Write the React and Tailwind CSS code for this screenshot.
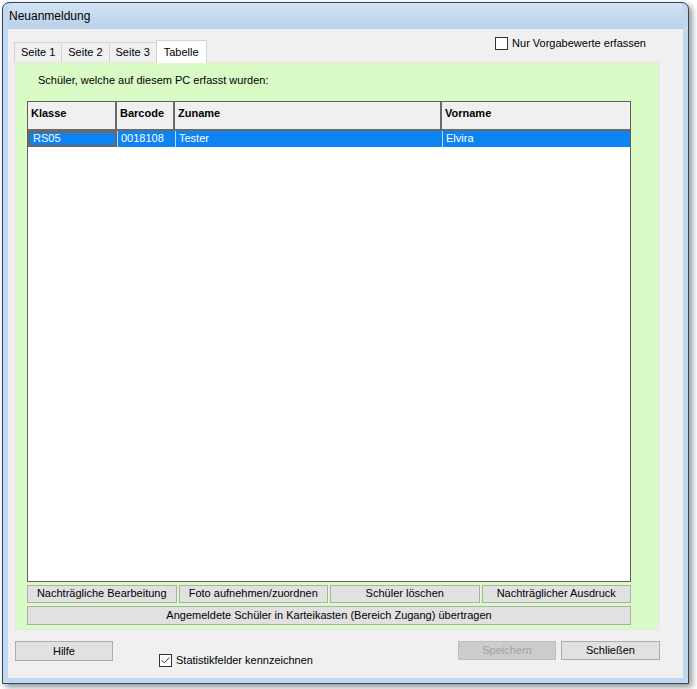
import { Check } from 'lucide-react'

const FONT = { fontFamily: '"Liberation Sans", Arial, sans-serif' }

function CheckBox({ checked, label }) {
  return (
    <div className="flex items-center gap-[4px] text-[11px] text-black">
      <span className="flex h-[13px] w-[13px] items-center justify-center border border-[#333333] bg-white">
        {checked && <Check size={11} strokeWidth={2} className="text-[#222]" />}
      </span>
      <span>{label}</span>
    </div>
  )
}

function Button({ children, disabled, className = '' }) {
  return (
    <button
      type="button"
      className={`flex items-center justify-center border text-[11px] leading-none ${
        disabled ? 'border-[#bfbfbf] bg-[#cccccc] text-[#a3a3a3]' : 'border-[#adadad] bg-[#e1e1e1] text-black'
      } ${className}`}
    >
      {children}
    </button>
  )
}

const COLUMNS = [
  { key: 'klasse', label: 'Klasse', width: 'w-[89px]' },
  { key: 'barcode', label: 'Barcode', width: 'w-[58px]' },
  { key: 'zuname', label: 'Zuname', width: 'w-[267px]' },
  { key: 'vorname', label: 'Vorname', width: 'flex-1' }
]

const ROWS = [{ klasse: 'RS05', barcode: '0018108', zuname: 'Tester', vorname: 'Elvira' }]

export default function App() {
  return (
    <div className="min-h-screen bg-white p-[2px]" style={FONT}>
      <div className="flex h-[682px] w-[687px] flex-col rounded-t-[7px] border border-[#2c4a63] bg-[#c3d8ee] px-[5px] pb-[5px] shadow-[3px_3px_6px_rgba(0,0,0,0.45)]">
        <div className="flex h-[26px] items-center rounded-t-[6px] bg-gradient-to-b from-[#d3e3f3] to-[#b7d0e9] pl-[1px] text-[12px] text-black">
          Neuanmeldung
        </div>

        <div className="flex flex-1 flex-col bg-[#f0f0f0]">
          <div className="flex items-start justify-between pl-[6px] pr-[37px] pt-[6px]">
            <div className="mt-[5px] flex items-end">
              {['Seite 1', 'Seite 2', 'Seite 3'].map((t) => (
                <div
                  key={t}
                  className="-mr-px flex h-[20px] items-center border border-b-0 border-[#d4d4d4] bg-[#f0f0f0] px-[6px] text-[11px]"
                >
                  {t}
                </div>
              ))}
              <div className="relative z-10 -mb-px flex h-[23px] items-start border border-b-0 border-[#d4d4d4] bg-white px-[7px] pt-[3px] text-[11px]">
                Tabelle
              </div>
            </div>
            <CheckBox label="Nur Vorgabewerte erfassen" />
          </div>

          <div className="ml-[7px] mr-[24px] flex h-[568px] flex-col border border-[#e6e6e6] bg-[#d9fcc6] pl-[11px] pr-[27px]">
            <div className="pl-[11px] pt-[9px] text-[11px] text-black">Schüler, welche auf diesem PC erfasst wurden:</div>

            <div className="mt-[12px] flex h-[481px] flex-col border border-[#5f5f5f] bg-white">
              <div className="flex h-[29px] border-b-2 border-[#6a6a6a] bg-[#f0f0f0]">
                {COLUMNS.map((c) => (
                  <div
                    key={c.key}
                    className={`${c.width} border-r-2 border-[#6a6a6a] pl-[3px] pt-[3px] text-[11px] font-bold text-black last:border-r-0`}
                  >
                    {c.label}
                  </div>
                ))}
              </div>
              {ROWS.map((r) => (
                <div key={r.barcode} className="flex h-[16px] bg-[#0d84ef] text-[11px] text-white">
                  {COLUMNS.map((c, i) => (
                    <div
                      key={c.key}
                      className={`${c.width} flex items-center pl-[3px] ${
                        i === 0 ? 'border-2 border-[#676767]' : 'border-l border-[#b9dcfb]'
                      }`}
                    >
                      {r[c.key]}
                    </div>
                  ))}
                </div>
              ))}
            </div>

            <div className="mt-[3px] grid h-[18px] grid-cols-4 gap-[2px]">
              <Button>Nachträgliche Bearbeitung</Button>
              <Button>Foto aufnehmen/zuordnen</Button>
              <Button>Schüler löschen</Button>
              <Button>Nachträglicher Ausdruck</Button>
            </div>
            <Button className="mt-[3px] h-[19px]">Angemeldete Schüler in Karteikasten (Bereich Zugang) übertragen</Button>
          </div>

          <div className="ml-[7px] mr-[23px] mt-[11px] flex items-start">
            <Button className="h-[20px] w-[98px]">Hilfe</Button>
            <div className="ml-[46px] mt-[11px]">
              <CheckBox checked label="Statistikfelder kennzeichnen" />
            </div>
            <div className="ml-auto flex gap-[5px]">
              <Button disabled className="h-[19px] w-[98px]">
                Speichern
              </Button>
              <Button className="h-[19px] w-[99px]">Schließen</Button>
            </div>
          </div>
        </div>
      </div>
    </div>
  )
}
